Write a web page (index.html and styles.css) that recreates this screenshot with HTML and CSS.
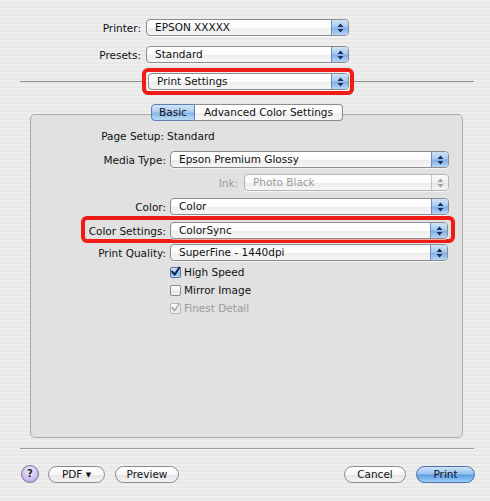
FILE: index.html
```html
<!DOCTYPE html>
<html>
<head>
<meta charset="utf-8">
<link rel="stylesheet" href="styles.css">
</head>
<body>
<div class="top">
  <div class="trow r1">
    <span class="lbl">Printer:</span>
    <div class="popup w203"><span class="pv">EPSON XXXXX</span><span class="pa"><svg width="7" height="10" viewBox="0 0 7 10"><polygon points="0.5,4 3.5,0.5 6.5,4"/><polygon points="0.5,6 3.5,9.5 6.5,6"/></svg></span></div>
  </div>
  <div class="trow r2">
    <span class="lbl">Presets:</span>
    <div class="popup w203"><span class="pv">Standard</span><span class="pa"><svg width="7" height="10" viewBox="0 0 7 10"><polygon points="0.5,4 3.5,0.5 6.5,4"/><polygon points="0.5,6 3.5,9.5 6.5,6"/></svg></span></div>
  </div>
  <div class="psrow">
    <div class="line lline"></div>
    <div class="redbox rb-top">
      <div class="popup w201"><span class="pv">Print Settings</span><span class="pa"><svg width="7" height="10" viewBox="0 0 7 10"><polygon points="0.5,4 3.5,0.5 6.5,4"/><polygon points="0.5,6 3.5,9.5 6.5,6"/></svg></span></div>
    </div>
    <div class="line rline"></div>
  </div>
</div>

<div class="tabs">
  <div class="tab sel">Basic</div>
  <div class="tab adv">Advanced Color Settings</div>
</div>

<div class="panel">
  <div class="prow static">
    <span class="lbl">Page Setup:</span>
    <span class="val">Standard</span>
  </div>
  <div class="prow media">
    <span class="lbl">Media Type:</span>
    <div class="popup w279"><span class="pv">Epson Premium Glossy</span><span class="pa"><svg width="7" height="10" viewBox="0 0 7 10"><polygon points="0.5,4 3.5,0.5 6.5,4"/><polygon points="0.5,6 3.5,9.5 6.5,6"/></svg></span></div>
  </div>
  <div class="prow ink">
    <span class="lbl dis">Ink:</span>
    <div class="popup w205 disabled"><span class="pv">Photo Black</span><span class="pa"><svg width="7" height="10" viewBox="0 0 7 10"><polygon points="0.5,4 3.5,0.5 6.5,4"/><polygon points="0.5,6 3.5,9.5 6.5,6"/></svg></span></div>
  </div>
  <div class="prow color">
    <span class="lbl">Color:</span>
    <div class="popup w279"><span class="pv">Color</span><span class="pa"><svg width="7" height="10" viewBox="0 0 7 10"><polygon points="0.5,4 3.5,0.5 6.5,4"/><polygon points="0.5,6 3.5,9.5 6.5,6"/></svg></span></div>
  </div>
  <div class="redbox rb-cs">
    <span class="lbl">Color Settings:</span>
    <div class="popup w278"><span class="pv">ColorSync</span><span class="pa"><svg width="7" height="10" viewBox="0 0 7 10"><polygon points="0.5,4 3.5,0.5 6.5,4"/><polygon points="0.5,6 3.5,9.5 6.5,6"/></svg></span></div>
  </div>
  <div class="prow pq">
    <span class="lbl">Print Quality:</span>
    <div class="popup w278"><span class="pv">SuperFine - 1440dpi</span><span class="pa"><svg width="7" height="10" viewBox="0 0 7 10"><polygon points="0.5,4 3.5,0.5 6.5,4"/><polygon points="0.5,6 3.5,9.5 6.5,6"/></svg></span></div>
  </div>
  <div class="chk first">
    <span class="box on"><svg width="11" height="11" viewBox="0 0 11 11"><path d="M2.2 5.6 L4.6 8.6 L9.4 1.6"/></svg></span>
    <span class="ctext">High Speed</span>
  </div>
  <div class="chk">
    <span class="box"></span>
    <span class="ctext">Mirror Image</span>
  </div>
  <div class="chk">
    <span class="box off"><svg width="11" height="11" viewBox="0 0 11 11"><path d="M2.2 5.6 L4.6 8.6 L9.4 1.6"/></svg></span>
    <span class="ctext dis">Finest Detail</span>
  </div>
</div>

<div class="sep"></div>

<div class="btnrow">
  <div class="help">?</div>
  <div class="btn pdf">PDF <span class="tri">&#9660;</span></div>
  <div class="btn preview">Preview</div>
  <div class="spacer"></div>
  <div class="btn cancel">Cancel</div>
  <div class="btn print">Print</div>
</div>
</body>
</html>
```

FILE: styles.css
```css
* { box-sizing: border-box; }

body {
  margin: 0;
  width: 490px;
  height: 501px;
  overflow: hidden;
  font-family: "DejaVu Sans", sans-serif;
  font-size: 10.5px;
  color: #111111;
  background: repeating-linear-gradient(to bottom, #eeeeee 0, #eeeeee 2px, #e8e8e8 2px, #e8e8e8 4px);
}

.top { padding-top: 19px; }

.trow {
  display: flex;
  align-items: center;
  height: 17px;
}
.trow.r1 { margin-bottom: 10px; }
.trow.r2 { margin-bottom: 5px; }
.trow .lbl {
  width: 141px;
  text-align: right;
  margin-right: 5px;
}

/* popup menus */
.popup {
  display: flex;
  align-items: stretch;
  height: 17px;
  border: 1px solid #8c8c8c;
  border-radius: 4px;
  background: linear-gradient(to bottom, #ffffff 0%, #fbfbfb 50%, #ececec 51%, #f6f6f6 100%);
  overflow: hidden;
  box-shadow: 0 1px 0 rgba(255,255,255,0.6);
}
.popup .pv {
  flex: 1;
  padding-left: 8px;
  line-height: 15px;
  white-space: nowrap;
}
.popup .pa {
  width: 17px;
  display: flex;
  align-items: center;
  justify-content: center;
  border-left: 1px solid #6d8cb8;
  background: linear-gradient(to bottom, #cfe3f8 0%, #a8cbf0 45%, #7fb0e8 55%, #b6d6f6 100%);
}
.popup .pa svg polygon { fill: #1c2f55; }

.popup.disabled { border-color: #b4b4b4; color: #9a9a9a; }
.popup.disabled .pa {
  border-left-color: #c4c4c4;
  background: linear-gradient(to bottom, #fafafa 0%, #f0f0f0 50%, #e6e6e6 51%, #f2f2f2 100%);
}
.popup.disabled .pa svg polygon { fill: #a0a0a0; }

.w203 { width: 203px; }
.w201 { width: 201px; }
.w279 { width: 279px; }
.w278 { width: 278px; }
.w205 { width: 205px; }

/* print settings row */
.psrow {
  display: flex;
  align-items: center;
  height: 27px;
}
.line { height: 1px; background: #8f8f8f; }
.lline { margin-left: 20px; width: 122px; }
.rline { width: 120px; }

.redbox {
  border: 4px solid #ee1c14;
  border-radius: 6px;
}
.rb-top { padding: 1px 1px 1px 2px; }

/* tabs */
.tabs {
  position: relative;
  z-index: 1;
  display: flex;
  justify-content: center;
  padding-left: 4px;
  margin-top: 9px;
}
.tab {
  height: 17px;
  line-height: 15px;
  border: 1px solid #8c8c8c;
  text-align: center;
  background: linear-gradient(to bottom, #ffffff 0%, #fafafa 50%, #ededed 51%, #f7f7f7 100%);
}
.tab.sel {
  width: 44px;
  border-radius: 4px 0 0 4px;
  border-color: #5f7fae;
  background: linear-gradient(to bottom, #d2e5f8 0%, #a9ccf1 45%, #86b6ea 55%, #bcdaf7 100%);
}
.tab.adv {
  width: 148px;
  border-left: none;
  border-radius: 0 4px 4px 0;
}

/* panel */
.panel {
  margin-top: -7px;
  margin-left: 30px;
  width: 433px;
  height: 324px;
  border: 1px solid #ababab;
  border-radius: 5px;
  background: #e1e1e1;
  padding-top: 13px;
}

.prow {
  display: flex;
  align-items: center;
  height: 17px;
}
.prow .lbl {
  width: 135px;
  text-align: right;
  margin-right: 4px;
}
.prow.static { height: 16px; }
.prow.static .lbl { width: 133px; margin-right: 3px; }
.prow.media { margin-top: 7px; }
.prow.ink {
  margin-top: 6px;
  justify-content: flex-end;
  margin-right: 13px;
}
.prow.ink .lbl { width: auto; margin-right: 6px; }
.prow.color { margin-top: 7px; }
.prow.pq { margin-top: 1px; }

.lbl.dis, .ctext.dis { color: #9a9a9a; }

.rb-cs {
  display: flex;
  align-items: center;
  margin-top: 1px;
  margin-left: 50px;
  width: 374px;
  padding: 2px 0 0 0;
}
.rb-cs .lbl {
  width: 81px;
  text-align: right;
  margin-right: 4px;
}

/* checkboxes */
.chk {
  display: flex;
  align-items: center;
  height: 12px;
  margin-left: 139px;
  margin-top: 6px;
}
.chk.first { margin-top: 5px; }
.box {
  width: 11px;
  height: 11px;
  border: 1px solid #8a8a8a;
  border-radius: 2px;
  background: linear-gradient(to bottom, #ffffff 0%, #f2f2f2 50%, #e2e2e2 51%, #f0f0f0 100%);
  position: relative;
}
.box svg {
  position: absolute;
  left: -1px;
  top: -2px;
}
.box svg path {
  fill: none;
  stroke-width: 2px;
  stroke-linecap: round;
  stroke-linejoin: round;
}
.box.on {
  border-color: #55719c;
  background: linear-gradient(to bottom, #d4e6f8 0%, #a6c9ef 50%, #84b4e9 51%, #bcdaf6 100%);
}
.box.on svg path { stroke: #13244a; }
.box.off { border-color: #b6b6b6; }
.box.off svg path { stroke: #a8a8a8; stroke-width: 1.6px; }
.ctext { margin-left: 3px; }

/* bottom */
.sep {
  margin: 10px 16px 0 20px;
  height: 1px;
  background: #9a9a9a;
  box-shadow: 0 1px 0 #f8f8f8;
}

.btnrow {
  display: flex;
  align-items: center;
  margin-top: 16px;
  padding-left: 21px;
  padding-right: 15px;
  height: 18px;
}
.help {
  width: 18px;
  height: 18px;
  border-radius: 50%;
  border: 1px solid #7a72a0;
  background: radial-gradient(circle at 50% 30%, #f2ecff 0%, #cbbdf0 60%, #a897d8 100%);
  text-align: center;
  line-height: 16px;
  font-weight: bold;
  font-size: 10px;
  color: #1c1c1c;
}
.btn {
  height: 17px;
  line-height: 15px;
  border: 1px solid #8a8a8a;
  border-radius: 9px;
  text-align: center;
  background: linear-gradient(to bottom, #ffffff 0%, #f7f7f7 50%, #e4e4e4 51%, #f4f4f4 100%);
}
.btn .tri { font-size: 7px; vertical-align: 1px; }
.pdf { width: 57px; margin-left: 9px; }
.preview { width: 64px; margin-left: 10px; }
.spacer { flex: 1; }
.cancel { width: 62px; }
.print {
  width: 59px;
  margin-left: 10px;
  border-color: #4a6fa6;
  background: linear-gradient(to bottom, #cfe4fa 0%, #95c2f0 45%, #5e9de3 55%, #9cd0f8 100%);
}
```
